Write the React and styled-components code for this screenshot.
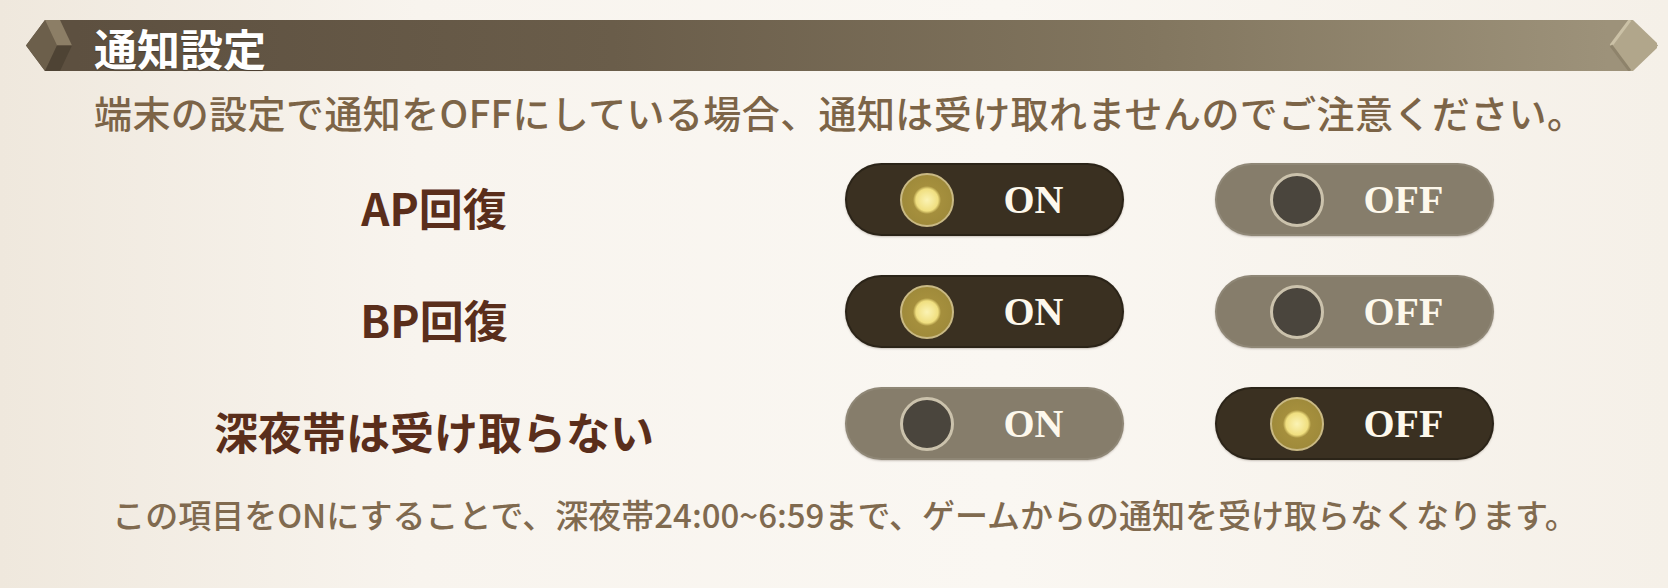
import React from "react";
import styled, { createGlobalStyle } from "styled-components";

const GlobalStyle = createGlobalStyle`
  html, body {
    margin: 0;
    padding: 0;
    background: #f7f3ec;
  }
`;

const rows = [
    { label: "AP回復", value: "on" },
    { label: "BP回復", value: "on" },
    { label: "深夜帯は受け取らない", value: "off" },
];

function LeftCap() {
    return (
        <CapSvg viewBox="0 0 50 51">
            <polygon points="0,25.5 19,0 50,0 50,51 19,51" fill="#5d5040" />
            <polygon points="0,25.5 19,0 31,25.5 19,51" fill="#6c5f4b" />
            <polygon points="19,0 34,0 46,25.5 31,25.5" fill="#8c7e66" />
            <polygon points="31,25.5 46,25.5 34,51 19,51" fill="#4e4334" />
        </CapSvg>
    );
}

function RightCap() {
    return (
        <CapSvg viewBox="0 0 50 51">
            <polygon points="0,0 24,0 50,25.5 24,51 0,51" fill="#9d927a" />
            <polygon points="2,25.5 22,0 25,0 49,23 49,28 25,51 22,51" fill="#b1a68b" />
            <polyline points="22,0 3,25.5" stroke="#cbc1a6" strokeWidth="3" fill="none" />
            <polyline points="3,25.5 22,51" stroke="#8e836b" strokeWidth="3" fill="none" />
        </CapSvg>
    );
}

function Toggle({ on, children }) {
    return (
        <ToggleBox $on={on}>
            <Knob $on={on} />
            <ToggleText>{children}</ToggleText>
        </ToggleBox>
    );
}

export default function App() {
    return (
        <Page>
            <GlobalStyle />
            <Header>
                <LeftCap />
                <HeaderBody>
                    <Title>通知設定</Title>
                </HeaderBody>
                <RightCap />
            </Header>
            <Notice>端末の設定で通知をOFFにしている場合、通知は受け取れませんのでご注意ください。</Notice>
            <Rows>
                {rows.map((row) => (
                    <Row key={row.label}>
                        <Label>{row.label}</Label>
                        <Toggles>
                            <Toggle on={row.value === "on"}>ON</Toggle>
                            <Toggle on={row.value === "off"}>OFF</Toggle>
                        </Toggles>
                    </Row>
                ))}
            </Rows>
            <Footnote>この項目をONにすることで、深夜帯24:00~6:59まで、ゲームからの通知を受け取らなくなります。</Footnote>
        </Page>
    );
}

let Page = styled.div`
    width: 1668px;
    height: 588px;
    box-sizing: border-box;
    padding-top: 20px;
    overflow: hidden;
    font-family: "Noto Sans CJK JP", "Noto Sans", sans-serif;
    background: linear-gradient(90deg, #efe8dd 0%, #f8f4ee 25%, #faf7f2 60%, #f5f0e8 100%);
`

let Header = styled.div`
    display: flex;
    height: 51px;
    margin: 0 10px 0 26px;
`

let CapSvg = styled.svg`
    display: block;
    flex: none;
    width: 50px;
    height: 51px;
`

let HeaderBody = styled.div`
    flex: 1;
    display: flex;
    align-items: center;
    padding: 3px 0 0 18px;
    background: linear-gradient(90deg, #5d5040 0%, #6a5d4a 35%, #82765f 70%, #9d927a 100%);
`

let Title = styled.h1`
    margin: 0;
    font-size: 43px;
    line-height: 1;
    font-weight: 700;
    color: #ffffff;
    text-shadow: 0 1px 1px rgba(40, 30, 20, 0.4);
`

let Notice = styled.p`
    margin: 17px 0 0 94px;
    font-size: 38px;
    line-height: 47px;
    font-weight: 500;
    letter-spacing: 0.4px;
    color: #7c6447;
    white-space: nowrap;
`

let Rows = styled.div`
    display: flex;
    flex-direction: column;
    gap: 39px;
    margin-top: 28px;
`

let Row = styled.div`
    display: flex;
    align-items: center;
    height: 73px;
`

let Label = styled.div`
    width: 688px;
    margin-left: 90px;
    padding-top: 14px;
    text-align: center;
    font-size: 44px;
    font-weight: 700;
    color: #5a2e1b;
`

let Toggles = styled.div`
    display: flex;
    gap: 91px;
    margin-left: 67px;
`

let ToggleBox = styled.div`
    display: flex;
    align-items: center;
    box-sizing: border-box;
    width: 279px;
    height: 73px;
    padding: 0 11px 0 55px;
    border-radius: 37px;
    background: ${(p) => (p.$on ? "#3a3021" : "#867d6b")};
    box-shadow: inset 0 0 0 2px ${(p) => (p.$on ? "rgba(0,0,0,0.25)" : "rgba(255,255,255,0.08)")},
        0 1px 2px rgba(60, 45, 30, 0.25);
`

let Knob = styled.div`
    flex: none;
    box-sizing: border-box;
    width: 54px;
    height: 54px;
    border-radius: 50%;
    background: ${(p) =>
        p.$on
            ? "radial-gradient(circle, #fbf3b4 0, #f0df80 11px, #a58f3d 14px, #9a8638 100%)"
            : "#4a453d"};
    border: ${(p) => (p.$on ? "2px solid #c9b984" : "3px solid #cbc2ac")};
`

let ToggleText = styled.span`
    flex: 1;
    text-align: center;
    font-family: "Liberation Serif", "Times New Roman", serif;
    font-size: 40px;
    font-weight: 700;
    color: #fdf8ec;
`

let Footnote = styled.p`
    margin: 34px 0 0;
    padding-left: 22px;
    text-align: center;
    font-size: 33px;
    line-height: 40px;
    font-weight: 500;
    color: #806a4f;
    white-space: nowrap;
`
